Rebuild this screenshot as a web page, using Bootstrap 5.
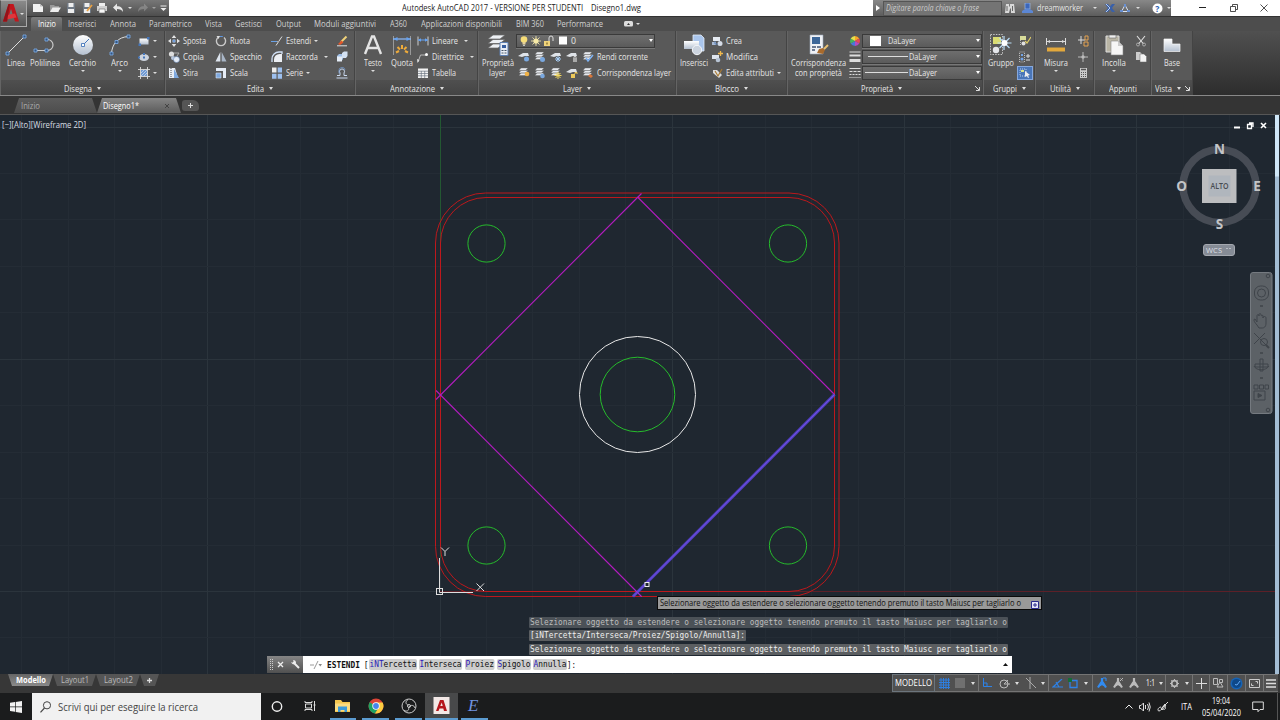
<!DOCTYPE html>
<html lang="it">
<head>
  <meta charset="UTF-8">
  <title>Autodesk AutoCAD 2017 - Disegno1.dwg</title>
  <link href="https://cdn.jsdelivr.net/npm/bootstrap@5.3.0/dist/css/bootstrap.min.css" rel="stylesheet">
  <style>
    body { width: 1280px; height: 720px; overflow: hidden; background: #333; color: #e6e6e6; font: 8.8px/10px "Open Sans", "Noto Sans", sans-serif; }
    svg { display: block; flex: none; }
    span { white-space: nowrap; }
    .g12 { width: 12px; height: 12px; }
    .g24 { width: 24px; height: 24px; }
    .dn { flex: none; width: 0; height: 0; border: 2px solid transparent; border-top: 2.5px solid #ddd; border-bottom: 0; }
    .dn.wide { border-left-width: 2.5px; border-right-width: 2.5px; border-top-width: 3px; }
    .cell { display: flex; align-items: center; justify-content: center; flex: none; }

    /* barra del titolo */
    .appbtn { width: 27px; height: 27px; background: linear-gradient(#8b8b8b, #555); border: 1px solid #aaa; border-left-color: #555; }
    .hdr { height: 31px; background: #4d4d4d; }
    .titlerow { height: 16px; }
    .qat { width: 142px; background: linear-gradient(#777, #4e4e4e); }
    .apptitle { width: 704px; background: #fff; color: #222; padding-left: 233px; gap: 8px; }
    .info { width: 298px; background: linear-gradient(#888, #5c5c5c); }
    .kwbox { width: 120px; height: 15px; background: #747474; border: 1px solid #555; font-style: italic; color: #ccc; padding-left: 2px; }
    .winbtns { width: 109px; background: #fff; color: #222; }
    .rtabs { height: 15px; border-top: 1px solid #333; color: #d0d0d0; }
    .rtab-on { width: 31px; background: linear-gradient(#7b7b7b, #5a5a5a); border-radius: 2px 2px 0 0; color: #fff; height: 14px; }

    /* ribbon */
    .ribbon { height: 65px; background: linear-gradient(#505050, #2d2d2d); border-bottom: 1px solid #888; }
    .panel { flex: none; background: #595959; border-right: 1px solid #444; border-left: 1px solid #646464; }
    .pbody { height: 49px; padding-top: 1.5px; }
    .ptitle { height: 15px; padding-top: 2px; background: linear-gradient(#4f4f4f, #444); gap: 5px; position: relative; }
    .big { flex: none; text-align: center; display: flex; flex-direction: column; align-items: center; }
    .big span { line-height: 10px; }
    .big svg { margin-bottom: 1px; }
    .big .dn { margin-top: 2px; }
    .sm { height: 16px; display: flex; align-items: center; gap: 3px; }
    .sm .dn { margin-left: 3px; }
    .drop { width: 120px; height: 14px; border: 1px solid #3a3a3a; background: linear-gradient(#6e6e6e, #5b5b5b); display: flex; align-items: center; padding-right: 1px; box-shadow: 0 1px 0 #777; }
    .drop .dn { margin-left: auto; border-top-color: #fff; }
    .sm.tight { gap: 1px; }
    .sel { width: 16px; height: 14px; background: #4a76b8; border: 1px solid #86a8dd; }
    .expand { position: absolute; right: 2px; top: 6px; }

    /* schede disegni */
    .ftabs { height: 19px; background: #343434; padding: 2px 0 0 14px; border-bottom: 1px solid #565656; }
    .ftab { height: 15px; clip-path: polygon(5px 0, calc(100% - 5px) 0, 100% 100%, 0 100%); background: linear-gradient(#5c5c5c, #4d4d4d); color: #aaa; display: flex; align-items: center; flex: none; }
    .ftab.on { background: linear-gradient(#858585, #5b5b5b); color: #fff; }
    .fplus { width: 17px; height: 11px; background: #555; border-radius: 3px 6px 3px 3px; margin: 2px 0 0 1px; }

    /* area di disegno */
    .model { height: 559px; position: relative; background: #1f2730; }
    .edge { position: absolute; right: 1px; top: 0; width: 4px; height: 559px; background: linear-gradient(#cfe6f7 61px, #a3bdd4 62px); }
    .vplabel { position: absolute; left: 2px; top: 5px; color: #d8dde2; }
    .dyn { position: absolute; left: 657px; top: 481px; width: 385px; height: 14px; background: #999; border: 1px solid #0a0a0a; color: #111; padding: 0 2px 1px; }
    .mono { font-family: "DejaVu Sans Mono", monospace; font-size: 8.3px; }
    .hist { position: absolute; left: 529px; top: 502px; gap: 2.4px; }
    .hist div { background: #5b5e61; height: 11px; padding: 0 1px; border-radius: 1px; width: max-content; line-height: 11px; color: #eee; }
    .hist .old { background: #4b5157; color: #bdbdbd; }
    .cmd { position: absolute; left: 267px; top: 541px; width: 745px; height: 17px; background: #fff; color: #111; }
    .cmdgrip { width: 36px; height: 17px; background: linear-gradient(#858585, #505050); }
    .opts { gap: 2.6px; }
    .opt { background: #ccc; border-radius: 2px; padding: 0 .5px; line-height: 11px; }
    .opt b { color: #2a1bb8; font-weight: 400; }
    .vnav { position: absolute; left: 1250px; top: 157px; }

    /* barra di stato */
    .status { height: 19px; background: #373737; }
    .sright { padding-right: 2px; }
    .ltab { height: 12px; clip-path: polygon(0 0, 100% 0, calc(100% - 4px) 100%, 4px 100%); background: #555; color: #bbb; }
    .ltab.on { background: linear-gradient(#666, #8a8a8a); color: #fff; font-weight: 700; }
    .sgroup { height: 18px; background: #505050; border: 1px solid #747474; border-left-width: 0; display: flex; align-items: center; flex: none; }

    /* barra delle applicazioni */
    .task { height: 27px; background: #1b1c1d; }
    .search { width: 229px; background: #f1f1f1; color: #444; font-size: 11.6px; gap: 7px; padding-left: 8px; }
    .app { width: 32.8px; height: 27px; border-bottom: 2px solid transparent; }
    .app.run { position: relative; }
    .app.run::after { content: ""; position: absolute; left: 3px; right: 3px; bottom: -2px; height: 2px; background: #5b9bd0; }
    .app.cur { background: #48494a; }
    .app.cur::after { left: 0; right: 0; }
  </style>
  <script src="https://cdn.jsdelivr.net/npm/bootstrap@5.3.0/dist/js/bootstrap.bundle.min.js"></script>
</head>
<body class="d-flex flex-column">

  <!-- Icone -->
  <svg width="0" height="0" class="position-absolute">
    <defs>
      <linearGradient id="lg" x1="0" y1="0" x2="0" y2="1"><stop offset="0" stop-color="#fff"/><stop offset="1" stop-color="#b4c0d0"/></linearGradient>
      <symbol id="linea" viewBox="0 0 24 24"><path d="M3.500 20.500L20.500 3.500" stroke="#ddd"/><path d="M2 19h3v3H2zM19 2h3v3h-3z" fill="#35567f" stroke="#7fb0ee" stroke-width=".8"/></symbol>
      <symbol id="poli" viewBox="0 0 24 24"><path d="M2.500 17.500h12a5.300 5.300 0 0 0 0-11h-1" fill="none" stroke="#ccc" stroke-width="1.200"/><path d="M1 16h3v3H1zM12 16h3v3h-3zM12 5h3v3h-3z" fill="#35567f" stroke="#7fb0ee" stroke-width=".8"/></symbol>
      <symbol id="cerchio" viewBox="0 0 24 24"><circle cx="12" cy="12" r="10" fill="url(#lg)"/><path d="M12 12l6-6" stroke="#4577bb"/><path d="M10.500 10.500h3v3h-3z" fill="#fff" stroke="#4577bb" stroke-width=".9"/></symbol>
      <symbol id="arco" viewBox="0 0 24 24"><path d="M3.500 20.500C4 11 10 4 20.500 3.500" fill="none" stroke="#ddd"/><path d="M2 19h3v3H2zM19 2h3v3h-3zM7 7.500h3v3H7z" fill="#35567f" stroke="#7fb0ee" stroke-width=".8"/></symbol>
      <symbol id="rett" viewBox="0 0 12 12"><path d="M1.500 3.500h9v6h-9z" fill="url(#lg)"/><path d="M.5 8.500H3V11H.5zM9 2h2.500v2.500H9z" fill="#4577bb"/></symbol>
      <symbol id="elli" viewBox="0 0 12 12"><ellipse cx="6" cy="6.500" rx="5" ry="3.500" fill="#ccd3dd"/><path d="M5 5.500h2v2H5zM5 2h2v2H5zM0 5.500h2v2H0z" fill="#4577bb"/></symbol>
      <symbol id="tratt" viewBox="0 0 12 12"><path d="M3 3h6.500v6.500H3z" fill="#6f9ad4"/><path d="M2.500 0v12M9.500 0v12M0 2.500h12M0 9.500h12" stroke="#ddd" stroke-width=".9"/><path d="M3 9l6-6M3 6l3-3M6 9l3-3" stroke="#e5edf7" stroke-width=".6"/></symbol>
      <symbol id="sposta" viewBox="0 0 12 12"><path d="M6 0l2.300 3H3.700zM6 12l2.300-3H3.700zM0 6l3-2.300v4.600zM12 6L9 3.700v4.600z" fill="#e4e4e4"/><path d="M4.800 4.800h2.400v2.400H4.800z" fill="#4f89d6" stroke="#d5e3f5" stroke-width=".5"/></symbol>
      <symbol id="copia" viewBox="0 0 12 12"><circle cx="3.500" cy="3" r="2.600" fill="#ddd"/><path d="M6 2h5l-2 3" fill="none" stroke="#aaa"/><circle cx="5" cy="7" r="2" fill="#b8c6dc"/><circle cx="8.500" cy="8.500" r="3" fill="#e4ebf5" stroke="#5c83b8" stroke-width=".5"/></symbol>
      <symbol id="stira" viewBox="0 0 12 12"><path d="M1 1h6l3 10H1z" fill="#e8edf5"/><path d="M6 2l5 9H6z" fill="#7fa9df"/><path d="M3 1v10" stroke="#555" stroke-dasharray="1"/></symbol>
      <symbol id="ruota" viewBox="0 0 12 12"><path d="M3 2.500a4.600 4.600 0 1 0 6 0" fill="none" stroke="#c9c9c9" stroke-width="1.400"/><path d="M4.200 1.500h3.600" stroke="#5e97e2"/><path d="M1.500 1l3.500 0-1.500 3z" fill="#ddd"/></symbol>
      <symbol id="specchio" viewBox="0 0 12 12"><path d="M5.300 1v9.500H.5z" fill="#dde4ee"/><path d="M6.700 1v9.500h4.800z" fill="#a8b5c6"/></symbol>
      <symbol id="scala" viewBox="0 0 12 12"><path d="M1 1h10v10H8V4H1z" fill="#e6ecf5"/><path d="M1 6h5v5H1z" fill="#7fa9df" stroke="#dce8f8" stroke-width=".6"/></symbol>
      <symbol id="estendi" viewBox="0 0 12 12"><path d="M0 6.500h6" stroke="#6ba2e6"/><path d="M5 10.500L11 1.500" stroke="#ddd"/><path d="M6 6.500h2" stroke="#aaa"/></symbol>
      <symbol id="racc" viewBox="0 0 12 12"><path d="M1 11V8a7 7 0 0 1 7-7h3v2" fill="none" stroke="#cfdff5" stroke-width="1.300"/><path d="M3 11V8.500A5.500 5.500 0 0 1 8.500 3H11v8z" fill="#eceff4"/></symbol>
      <symbol id="serie" viewBox="0 0 12 12"><path d="M1 .5h4.500v5H1z" fill="#eee"/><path d="M6.700.5H11v5H6.700zM1 6.700h4.500v5H1zM6.700 6.700H11v5H6.700z" fill="#9dc0ef"/></symbol>
      <symbol id="canc" viewBox="0 0 12 12"><path d="M10.500 1.500L5 7" stroke="#f0d27a" stroke-width="2"/><path d="M5.500 5.500l2 2L4 10 2 9z" fill="#e2562a"/><path d="M1 10.800h10" stroke="#eee" stroke-width=".9"/></symbol>
      <symbol id="esplodi" viewBox="0 0 12 12"><path d="M1 5l2-2h4v5l-1.500 2H1z" fill="#9fbfe8"/><path d="M6 2l2-1.500h3.500V5L10 7H6z" fill="#d3e1f3"/><path d="M1 5.500h5v5H1z" fill="#e5edf7"/></symbol>
      <symbol id="offset" viewBox="0 0 12 12"><path d="M.5 11h11M1 8.500h3V6a2.500 2.500 0 1 1 4 0v2.500h3" fill="none" stroke="#c9d8ee"/><path d="M3 6.500V4a3 3 0 0 1 6-1" fill="none" stroke="#7ba8e4" stroke-width=".7"/></symbol>
      <symbol id="testo" viewBox="0 0 24 24"><path d="M4 21L11 3.500h2L20 21M6.500 15h11" fill="none" stroke="#e4e4e4" stroke-width="2.400"/></symbol>
      <symbol id="quota" viewBox="0 0 24 24"><path d="M3.500 3v19M20.500 3v19" stroke="#999"/><path d="M3 6h18" stroke="#8bbcff" stroke-width="1.200"/><path d="M3.500 6l4-2v4zM20.500 6l-4-2v4z" fill="#67a3f1"/><path d="M12 12v4M7.500 14l2.500 2.500M16.500 14L14 16.500M6 19.500l3-1.500M18 19.500l-3-1.500" stroke="#eeab3b" stroke-width="2"/></symbol>
      <symbol id="lineare" viewBox="0 0 12 12"><path d="M1 1.500v9M11 1.500v9" stroke="#ccc"/><path d="M1 5h10" stroke="#67a3f1"/><path d="M1 5l3-1.700v3.400zM11 5L8 3.300v3.400z" fill="#67a3f1"/></symbol>
      <symbol id="dirett" viewBox="0 0 12 12"><path d="M1 11L3.500 4H10" fill="none" stroke="#bbb"/><circle cx="9.500" cy="3.500" r="1.500" fill="#fff"/><path d="M0 8l2.500 1L.5 12z" fill="#ddd"/></symbol>
      <symbol id="tabella" viewBox="0 0 12 12"><path d="M1 1.500h10v9.500H1z" fill="#f3f3f3"/><path d="M1 4.200h10M1 6.500h10M1 8.800h10M4.300 4v7M7.700 4v7" stroke="#6c7582" stroke-width=".7"/></symbol>
      <symbol id="proplay" viewBox="0 0 24 24"><path d="M7 2h12l-5 4H2zM7 6.500h12l-5 4H2zM7 11h10l-5 4H2z" fill="#edf0f4" stroke="#666" stroke-width=".7"/><path d="M14 9.500h8v13h-8z" fill="#e9eef6" stroke="#5d7fb0"/><path d="M16 12h4v3h-4z" fill="#355ea0"/><path d="M15.500 17.500h2m1 0h2m-5 2.500h2m1 0h2" stroke="#456"/></symbol>
      <symbol id="lay3" viewBox="0 0 12 12"><path d="M3 1h7L7.500 3.500H1zM3 3.500h7L7.500 6H1zM3 6h7L7.500 8.500H1z" fill="#e6e9ee" stroke="#666" stroke-width=".4"/></symbol>
      <symbol id="lay1" viewBox="0 0 12 12"><path d="M0 5l5-3h5l1 3H7L4 6z" fill="#dfe3e8"/></symbol>
      <symbol id="lamp" viewBox="0 0 12 12"><circle cx="6" cy="4.500" r="3.300" fill="#f6dd78"/><path d="M4.500 7h3v2.500h-3z" fill="#e7d298"/><path d="M5 10.300h2" stroke="#ddd"/></symbol>
      <symbol id="sole" viewBox="0 0 12 12"><path d="M6 1v10M1 6h10M2.500 2.500l7 7M9.500 2.500l-7 7" stroke="#efe2a4" stroke-width=".9"/><circle cx="6" cy="6" r="2.600" fill="#f6e9a7"/></symbol>
      <symbol id="lucc" viewBox="0 0 12 12"><path d="M2 6h6v5H2z" fill="#f0d47b"/><path d="M7 6V3a2 2 0 0 1 4 0v3" fill="none" stroke="#ddd"/><path d="M5 7.500v2" stroke="#604a10"/></symbol>
      <symbol id="inser" viewBox="0 0 24 24"><path d="M11 2h8l3 3v13H11z" fill="#a9c5ec" stroke="#e4edf9" stroke-width=".8"/><path d="M2 8h15v8H2z" fill="url(#lg)"/><circle cx="15" cy="17" r="4.700" fill="#ccd4df" stroke="#f5f7fa"/></symbol>
      <symbol id="crea" viewBox="0 0 12 12"><path d="M2 2h7v4H2z" fill="#e6ebf2"/><path d="M1 7h4v3H1z" fill="#aabbd4"/><circle cx="9" cy="8.500" r="2.500" fill="#d5dce7"/><path d="M4 6v3h3" fill="none" stroke="#5e82b5"/></symbol>
      <symbol id="modif" viewBox="0 0 12 12"><path d="M1 4h7v4H1z" fill="#dfe5ee"/><circle cx="7" cy="9" r="2.300" fill="#b8c4d4"/><path d="M9.500 0v5M7 2.500h5" stroke="#f0b94d" stroke-width="1.300"/></symbol>
      <symbol id="attr" viewBox="0 0 12 12"><path d="M2 3h4l5 5-3 3-6-5z" fill="#ddd"/><path d="M4 4l3 5 4-7" fill="none" stroke="#a9792f" stroke-width="1.100"/></symbol>
      <symbol id="corr" viewBox="0 0 24 24"><path d="M3 2h13v19H3z" fill="#eff1f5" stroke="#9aa8bb" stroke-width=".6"/><path d="M5 4h8v7H5z" fill="#3c6698"/><path d="M5 14h4m1 0h4M5 17h3" stroke="#405270" stroke-width="1.300"/><path d="M12 16l4-1 2 2-2 4-6-1z" fill="#a86a2c"/><path d="M17 16l4-4" stroke="#eabf70" stroke-width="2"/></symbol>
      <symbol id="ruotacol" viewBox="0 0 12 12"><path d="M6 6V1a5 5 0 0 1 4.300 2.500z" fill="#f7a328"/><path d="M6 6l4.300-2.500a5 5 0 0 1 0 5z" fill="#e84855"/><path d="M6 6l4.300 2.500A5 5 0 0 1 6 11z" fill="#b54bc0"/><path d="M6 6v5a5 5 0 0 1-4.300-2.500z" fill="#4979d8"/><path d="M6 6L1.700 8.500a5 5 0 0 1 0-5z" fill="#44b55b"/><path d="M6 6L1.700 3.500A5 5 0 0 1 6 1z" fill="#e5e04c"/></symbol>
      <symbol id="spess" viewBox="0 0 12 12"><path d="M.5 1h11" stroke="#ddd"/><path d="M.5 4.500h11" stroke="#ddd" stroke-width="2"/><path d="M.5 9.500h11" stroke="#ddd" stroke-width="3"/></symbol>
      <symbol id="tipol" viewBox="0 0 12 12"><path d="M.5 1.500h11" stroke="#ddd"/><path d="M.5 4.500h11" stroke="#ddd" stroke-dasharray="3 1"/><path d="M.5 7.500h11" stroke="#ddd" stroke-dasharray="2 1"/><path d="M.5 10.500h11" stroke="#ddd" stroke-dasharray="1 1"/></symbol>
      <symbol id="gruppo" viewBox="0 0 24 24"><path d="M1.500 1.500h12v20h-12z" fill="none" stroke="#c5c5c5" stroke-dasharray="1.500 1.200"/><path d="M4 4h8v7H4z" fill="#d9dc73"/><circle cx="7" cy="17" r="3.200" fill="#e5e7eb"/><path d="M15 3v14M8.500 10h14M10.500 5l10 10M20.500 5l-10 10" stroke="#b9ddf8" stroke-width="1.200"/><circle cx="15.500" cy="10" r="3" fill="#fff"/></symbol>
      <symbol id="gr1" viewBox="0 0 12 12"><path d="M1 1h6v4H1z" fill="#d9dc9a"/><path d="M1.500 5v6" stroke="#bbb" stroke-dasharray="1"/><circle cx="4.500" cy="8.500" r="2" fill="#e1e1e1"/><path d="M6 6l2 2 4-6" fill="none" stroke="#e1cf69" stroke-width="1.200"/></symbol>
      <symbol id="gr2" viewBox="0 0 12 12"><path d="M.5 1h5v10h-5z" fill="none" stroke="#bbb" stroke-dasharray="1"/><path d="M2 3h2v2H2z" fill="#73a4e6"/><circle cx="3" cy="8" r="1.500" fill="#73a4e6"/><path d="M7 5h4M9 3v4M7 9h4" stroke="#ddd"/></symbol>
      <symbol id="gr3" viewBox="0 0 12 12"><path d="M1 2h6v7H1z" fill="none" stroke="#b8cdea" stroke-dasharray="1"/><path d="M2 3h3v2H2z" fill="#dbe28b"/><path d="M6 4l5 4-2 .5 1 2-1 .5-1-2-2 1z" fill="#eee"/></symbol>
      <symbol id="misura" viewBox="0 0 24 24"><path d="M2.500 5v7M21.500 5v7M3 8.500h18" stroke="#ddd"/><path d="M3 8.500l3-1.500v3zM21 8.500L18 7v3z" fill="#ddd"/><path d="M3 14.500h18v4H3z" fill="#e3a83c"/></symbol>
      <symbol id="ut1" viewBox="0 0 12 12"><path d="M4 1v8M1 5h7" stroke="#ddd"/><path d="M8 1h3v4H8zM7 7h4v4H7z" fill="none" stroke="#e6a350"/></symbol>
      <symbol id="ut2" viewBox="0 0 12 12"><path d="M6 1v10M1 6h10" stroke="#bbb"/><circle cx="6" cy="6" r="1.700" fill="#bbb"/></symbol>
      <symbol id="calc" viewBox="0 0 12 12"><path d="M3 1h7v10H3z" fill="#ccc"/><path d="M4 2.500h5" stroke="#555" stroke-width="1.500"/><path d="M4 5.500h5M4 7.500h5M4 9.500h5" stroke="#555" stroke-dasharray="1"/></symbol>
      <symbol id="incolla" viewBox="0 0 24 24"><path d="M4 3h13v16H4z" fill="#b9b5a5" stroke="#ddd"/><path d="M7 2h7v3H7z" fill="#eee" stroke="#666" stroke-width=".6"/><path d="M9 8h7l5 5v9H9z" fill="#f6f6f6" stroke="#888" stroke-width=".6"/><path d="M16 8v5h5" fill="#ccc"/></symbol>
      <symbol id="taglia" viewBox="0 0 12 12"><path d="M2 1l6.500 8M10 1L3.500 9" stroke="#e0e0e0" stroke-width="1.100"/><circle cx="3" cy="9.500" r="1.500" fill="none" stroke="#aaa"/><circle cx="9" cy="9.500" r="1.500" fill="none" stroke="#aaa"/></symbol>
      <symbol id="copia2" viewBox="0 0 12 12"><path d="M1 1h4l2 2v6H1z" fill="#ccc"/><path d="M5 3h4l2.500 2.500V11H5z" fill="#f3f3f3" stroke="#666" stroke-width=".5"/></symbol>
      <symbol id="base" viewBox="0 0 24 24"><path d="M4 6h8v5h8v7.500H4z" fill="url(#lg)" stroke="#f5f5f5" stroke-width=".7"/></symbol>
      <symbol id="nuovo" viewBox="0 0 12 12"><path d="M1 2h7l3 2.500V10H1z" fill="#f2f2f2"/><path d="M8 2v2.500h3" fill="#bbb"/></symbol>
      <symbol id="apri" viewBox="0 0 12 12"><path d="M1 3h4l1 1h4v6H1z" fill="#999"/><path d="M3.500 5.500H12L9 10H1z" fill="#eee"/></symbol>
      <symbol id="salva" viewBox="0 0 12 12"><path d="M2 1h8v10H2z" fill="#707984"/><path d="M3.500 1h5v4h-5zM3 7h6v4H3z" fill="#eee"/></symbol>
      <symbol id="stampa" viewBox="0 0 12 12"><path d="M3 1h6v3H3z" fill="#eee"/><path d="M1 4h10v5H1z" fill="#d0d0d0"/><path d="M3 7h6v4H3z" fill="#f7f7f7" stroke="#666" stroke-width=".6"/></symbol>
      <symbol id="annulla" viewBox="0 0 12 12"><path d="M5 1.500v2.700c4 0 6 2 6 5.800-1-2-3-3-6-3v2.500L1 5.500z" fill="#e7e7e7"/></symbol>
      <symbol id="omino" viewBox="0 0 12 12"><path d="M6 1v4M5.500 5L2 10.500M6.500 5L10 10.500M4 8.500l2-2.500 2 2.500" stroke="currentColor" fill="none" stroke-width="2.200"/></symbol>
    </defs>
  </svg>

  <!-- Titolo e schede del ribbon -->
  <header class="hdr d-flex">
    <div class="appbtn d-flex align-items-center">
      <svg width="19" height="22" viewBox="0 0 19 22"><path d="M2 18.500L7.500 1h5L18 18.500h-4L10 6 6 18.500z" fill="#c2161d"/><path d="M6 12l8-1.500 1.500 4L5 16.500z" fill="#e2353b"/><path d="M2 18.500L7.500 1H9L6 18.500z" fill="#941218"/></svg>
      <i class="dn"></i>
    </div>
    <div class="d-flex flex-column">
      <div class="titlerow d-flex">
        <div class="qat d-flex align-items-center">
          <div class="cell" style="width:22px"><svg class="g12"><use href="#nuovo"/></svg></div>
          <div class="cell" style="width:11px"><svg class="g12"><use href="#apri"/></svg></div>
          <div class="cell" style="width:22px"><svg class="g12"><use href="#salva"/></svg></div>
          <div class="cell" style="width:10px"><svg class="g12" viewBox="0 0 12 12"><use href="#salva"/><path d="M11 3L6 9" stroke="#e9a142" stroke-width="1.800"/></svg></div>
          <div class="cell" style="width:20px"><svg class="g12"><use href="#stampa"/></svg></div>
          <div class="cell" style="width:12px"><svg class="g12"><use href="#annulla"/></svg></div>
          <div class="cell" style="width:12px"><i class="dn"></i></div>
          <div class="cell opacity-25" style="width:14px"><svg class="g12" viewBox="0 0 12 12"><use href="#annulla" transform="translate(12) scale(-1 1)"/></svg></div>
          <div class="cell opacity-50" style="width:8px"><i class="dn"></i></div>
          <div class="cell" style="width:11px"><svg width="7" height="7"><path d="M.5 1h6" stroke="#eee"/><path d="M.5 3h6l-3 3z" fill="#eee"/></svg></div>
        </div>
        <div class="apptitle d-flex align-items-center"><span data-w="181">Autodesk AutoCAD 2017 - VERSIONE PER STUDENTI</span><span data-w="50">Disegno1.dwg</span></div>
        <div class="info d-flex align-items-center">
          <div class="cell" style="width:10px"><svg width="4" height="6"><path d="M0 0l4 3-4 3z" fill="#fff"/></svg></div>
          <div class="kwbox d-flex align-items-center"><span data-w="93">Digitare parola chiave o frase</span></div>
          <div class="cell" style="width:15px"><svg width="10" height="11"><path d="M1 1h3v2l1 1V1h4l1 9H6V5L5 6 4 10H0z" fill="#d9d9d9"/><path d="M2 3v5M7.500 3v5" stroke="#666"/></svg></div>
          <div class="cell" style="width:20px"><svg width="11" height="11"><path d="M3 0h5v6H3z" fill="#3c67ba" stroke="#9bb7e4" stroke-width=".7"/><path d="M0 10V8l3-2h5l3 2v2z" fill="#5c87d4"/></svg></div>
          <span data-w="46">dreamworker</span>
          <div class="cell" style="width:23px"><i class="dn"></i></div>
          <div class="cell" style="width:8px"><svg width="10" height="8"><path d="M0 0h3l2 2.500L7 0h3L7 4l3 4H7L5 5.500 3 8H0l3-4z" fill="#3960aa"/><path d="M1 0l4 4-4 4" fill="none" stroke="#b7cdf0"/></svg></div>
          <div class="cell" style="width:22px"><svg width="10" height="9"><path d="M5 1l3.500 6.500h-7z" fill="none" stroke="#d8e4f8"/><path d="M0 6h3v2H0zM7 6h3v2H7zM4 0h2v3H4z" fill="#6a91d2"/></svg></div>
          <i class="dn"></i>
          <div class="cell" style="width:34px"><svg width="11" height="11"><circle cx="5.500" cy="5.500" r="5" fill="#fff"/><text x="3.300" y="8.700" font-size="8.500" font-weight="700" fill="#295bb0">?</text></svg></div>
          <i class="dn" style="margin-left:-7px"></i>
        </div>
        <div class="winbtns d-flex align-items-center">
          <div class="cell ms-3" style="width:32px"><svg width="8" height="8"><path d="M0 3.500h7" stroke="#222"/></svg></div>
          <div class="cell" style="width:29px"><svg width="8" height="8"><path d="M.5 2.500h5v5h-5zM2.500 2V.5h5v5H6" fill="none" stroke="#222" stroke-width=".8"/></svg></div>
          <div class="cell" style="width:32px"><svg width="8" height="8"><path d="M.5.5l7 7M7.500.5l-7 7" stroke="#222" stroke-width=".8"/></svg></div>
        </div>
      </div>
      <nav class="rtabs d-flex align-items-center">
        <div class="rtab-on cell ms-1"><span data-w="18">Inizio</span></div>
        <div class="cell" style="width:40px"><span data-w="28">Inserisci</span></div>
        <div class="cell" style="width:42px"><span data-w="26">Annota</span></div>
        <div class="cell" style="width:53px"><span data-w="43">Parametrico</span></div>
        <div class="cell" style="width:32px"><span data-w="17">Vista</span></div>
        <div class="cell" style="width:39px"><span data-w="27">Gestisci</span></div>
        <div class="cell" style="width:40px"><span data-w="25">Output</span></div>
        <div class="cell" style="width:74px"><span data-w="62">Moduli aggiuntivi</span></div>
        <div class="cell" style="width:33px"><span data-w="17">A360</span></div>
        <div class="cell" style="width:93px"><span data-w="81">Applicazioni disponibili</span></div>
        <div class="cell" style="width:43px"><span data-w="28">BIM 360</span></div>
        <div class="cell" style="width:58px"><span data-w="46">Performance</span></div>
        <svg style="margin-left:15px" width="9" height="6"><rect width="9" height="5.500" rx="1.500" fill="#ddd"/><path d="M3 4l1.500-2L6 4z" fill="#333"/></svg>
        <i class="dn" style="margin-left:3px"></i>
      </nav>
    </div>
  </header>

  <!-- Ribbon -->
  <div class="ribbon d-flex">
    <section class="panel" style="width:165px">
      <div class="pbody d-flex">
        <div class="big" style="width:29px"><svg class="g24"><use href="#linea"/></svg><span data-w="18">Linea</span></div>
        <div class="big" style="width:30px"><svg class="g24"><use href="#poli"/></svg><span data-w="30">Polilinea</span></div>
        <div class="big" style="width:45px"><svg class="g24"><use href="#cerchio"/></svg><span data-w="27">Cerchio</span><i class="dn"></i></div>
        <div class="big" style="width:29px"><svg class="g24"><use href="#arco"/></svg><span data-w="17">Arco</span><i class="dn"></i></div>
        <div class="ps-1">
          <div class="sm"><svg class="g12"><use href="#rett"/></svg><i class="dn ms-0"></i></div>
          <div class="sm"><svg class="g12"><use href="#elli"/></svg><i class="dn ms-0"></i></div>
          <div class="sm"><svg class="g12"><use href="#tratt"/></svg><i class="dn ms-0"></i></div>
        </div>
      </div>
      <div class="ptitle cell"><span data-w="28">Disegna</span><i class="dn wide"></i></div>
    </section>

    <section class="panel" style="width:190px">
      <div class="pbody d-flex">
        <div style="width:49px;padding-left:2px">
          <div class="sm"><svg class="g12"><use href="#sposta"/></svg><span data-w="23">Sposta</span></div>
          <div class="sm"><svg class="g12"><use href="#copia"/></svg><span data-w="21">Copia</span></div>
          <div class="sm"><svg class="g12"><use href="#stira"/></svg><span data-w="15">Stira</span></div>
        </div>
        <div style="width:56px">
          <div class="sm"><svg class="g12"><use href="#ruota"/></svg><span data-w="20">Ruota</span></div>
          <div class="sm"><svg class="g12"><use href="#specchio"/></svg><span data-w="32">Specchio</span></div>
          <div class="sm"><svg class="g12"><use href="#scala"/></svg><span data-w="18">Scala</span></div>
        </div>
        <div style="width:65px">
          <div class="sm"><svg class="g12"><use href="#estendi"/></svg><span data-w="25">Estendi</span><i class="dn ms-0"></i></div>
          <div class="sm"><svg class="g12"><use href="#racc"/></svg><span data-w="32">Raccorda</span><i class="dn"></i></div>
          <div class="sm"><svg class="g12"><use href="#serie"/></svg><span data-w="17">Serie</span><i class="dn ms-0"></i></div>
        </div>
        <div>
          <div class="sm"><svg class="g12"><use href="#canc"/></svg></div>
          <div class="sm"><svg class="g12"><use href="#esplodi"/></svg></div>
          <div class="sm"><svg class="g12"><use href="#offset"/></svg></div>
        </div>
      </div>
      <div class="ptitle cell"><span data-w="17">Edita</span><i class="dn wide"></i></div>
    </section>

    <section class="panel" style="width:123px">
      <div class="pbody d-flex">
        <div class="big" style="width:33px"><svg class="g24"><use href="#testo"/></svg><span data-w="18">Testo</span><i class="dn"></i></div>
        <div class="big" style="width:26px"><svg class="g24"><use href="#quota"/></svg><span data-w="22">Quota</span></div>
        <div style="padding-left:2px">
          <div class="sm"><svg class="g12"><use href="#lineare"/></svg><span data-w="26">Lineare</span><i class="dn"></i></div>
          <div class="sm"><svg class="g12"><use href="#dirett"/></svg><span data-w="32">Direttrice</span><i class="dn"></i></div>
          <div class="sm"><svg class="g12"><use href="#tabella"/></svg><span data-w="24">Tabella</span></div>
        </div>
      </div>
      <div class="ptitle cell"><span data-w="45">Annotazione</span><i class="dn wide"></i></div>
    </section>

    <section class="panel" style="width:198px">
      <div class="pbody d-flex">
        <div class="big" style="width:37px"><svg class="g24"><use href="#proplay"/></svg><span data-w="32">Proprietà</span><span data-w="17">layer</span></div>
        <div>
          <div class="sm">
            <div class="drop" style="width:139px;padding-left:1px">
              <svg class="g12"><use href="#lamp"/></svg><svg class="g12"><use href="#sole"/></svg><svg class="g12"><use href="#lucc"/></svg>
              <svg width="13" height="9"><path d="M5 .5h8v8H5z" fill="#fff"/></svg><span style="padding-left:4px">0</span><i class="dn wide"></i>
            </div>
          </div>
          <div class="sm" style="padding-left:2px;gap:4px">
            <svg class="g12" viewBox="0 0 12 12"><use href="#lay1"/><circle cx="8.500" cy="8" r="2.500" fill="#7aa8df"/></svg>
            <svg class="g12" viewBox="0 0 12 12"><use href="#lay3"/><circle cx="8.500" cy="8.500" r="2.500" fill="#7aa8df"/></svg>
            <svg class="g12" viewBox="0 0 12 12"><use href="#lay1"/><path d="M8 5v6M5 8h6M6 6l4 4M10 6l-4 4" stroke="#a7cdf5"/></svg>
            <svg class="g12" viewBox="0 0 12 12"><use href="#lay1"/><path d="M7 7h4v4H7z" fill="#aaa"/><path d="M8 7V5.500h2V7" fill="none" stroke="#ccc"/></svg>
            <svg class="g12" viewBox="0 0 12 12"><use href="#lay3"/><path d="M4 7l2 3 5-6" fill="none" stroke="#7fb3f4" stroke-width="1.500"/></svg>
            <span style="margin-left:-1px"><span data-w="51">Rendi corrente</span></span>
          </div>
          <div class="sm" style="padding-left:2px;gap:4px">
            <svg class="g12" viewBox="0 0 12 12"><use href="#lay3"/><circle cx="9" cy="7" r="2.300" fill="#efb146"/></svg>
            <svg class="g12" viewBox="0 0 12 12"><use href="#lay3"/><circle cx="8.500" cy="9" r="2.300" fill="#7aa8df"/></svg>
            <svg class="g12" viewBox="0 0 12 12"><use href="#lay3"/><path d="M8 5v7M4.500 8.500h7M5.500 6l5 5M10.500 6l-5 5" stroke="#f2d75f"/></svg>
            <svg class="g12" viewBox="0 0 12 12"><use href="#lay1"/><path d="M5 7h4v4H5z" fill="#edc95a"/><path d="M9 7V5.500h2V7" fill="none" stroke="#edc95a"/></svg>
            <svg class="g12" viewBox="0 0 12 12"><use href="#lay3"/><path d="M6 9l2-2 3 2-2 2z" fill="#d9763a"/></svg>
            <span style="margin-left:-1px"><span data-w="74">Corrispondenza layer</span></span>
          </div>
        </div>
      </div>
      <div class="ptitle cell"><span data-w="19">Layer</span><i class="dn wide"></i></div>
    </section>

    <section class="panel" style="width:111px">
      <div class="pbody d-flex">
        <div class="big" style="width:34px"><svg class="g24"><use href="#inser"/></svg><span data-w="28">Inserisci</span></div>
        <div>
          <div class="sm"><svg class="g12"><use href="#crea"/></svg><span data-w="16">Crea</span></div>
          <div class="sm"><svg class="g12"><use href="#modif"/></svg><span data-w="32">Modifica</span></div>
          <div class="sm"><svg class="g12"><use href="#attr"/></svg><span data-w="48">Edita attributi</span><i class="dn ms-0"></i></div>
        </div>
      </div>
      <div class="ptitle cell"><span data-w="24">Blocco</span><i class="dn wide"></i></div>
    </section>

    <section class="panel" style="width:196px">
      <div class="pbody d-flex">
        <div class="big" style="width:61px"><svg class="g24"><use href="#corr"/></svg><span data-w="55">Corrispondenza</span><span data-w="47">con proprietà</span></div>
        <div>
          <div class="sm tight"><svg class="g12"><use href="#ruotacol"/></svg><div class="drop" style="padding-left:7px"><svg width="11" height="10"><path d="M0 0h11v10H0z" fill="#fff"/></svg><span style="padding-left:7px"><span data-w="28">DaLayer</span></span><i class="dn wide"></i></div></div>
          <div class="sm tight"><svg class="g12"><use href="#spess"/></svg><div class="drop" style="padding-left:5px"><svg width="41" height="3"><path d="M0 1.500h40" stroke="#ddd"/></svg><span data-w="28">DaLayer</span><i class="dn wide"></i></div></div>
          <div class="sm tight"><svg class="g12"><use href="#tipol"/></svg><div class="drop" style="padding-left:2px"><svg width="44" height="3"><path d="M0 1.500h43" stroke="#ddd"/></svg><span data-w="28">DaLayer</span><i class="dn wide"></i></div></div>
        </div>
      </div>
      <div class="ptitle cell pe-2"><span data-w="32">Proprietà</span><i class="dn wide"></i><svg class="expand" width="5" height="5"><path d="M0 0l4 4M4.500 1v3.500H1" stroke="#ddd" fill="none"/></svg></div>
    </section>

    <section class="panel" style="width:52px">
      <div class="pbody d-flex">
        <div class="big" style="width:33px"><svg class="g24"><use href="#gruppo"/></svg><span data-w="26">Gruppo</span></div>
        <div>
          <div class="sm"><div class="cell" style="width:16px"><svg class="g12"><use href="#gr1"/></svg></div></div>
          <div class="sm"><div class="cell" style="width:16px"><svg class="g12"><use href="#gr2"/></svg></div></div>
          <div class="sm"><div class="sel cell"><svg class="g12"><use href="#gr3"/></svg></div></div>
        </div>
      </div>
      <div class="ptitle cell"><span data-w="24">Gruppi</span><i class="dn wide"></i></div>
    </section>

    <section class="panel" style="width:59px">
      <div class="pbody d-flex">
        <div class="big" style="width:39px"><svg class="g24"><use href="#misura"/></svg><span data-w="24">Misura</span><i class="dn"></i></div>
        <div style="padding-left:2px">
          <div class="sm"><svg class="g12"><use href="#ut1"/></svg></div>
          <div class="sm"><svg class="g12"><use href="#ut2"/></svg></div>
          <div class="sm"><svg class="g12"><use href="#calc"/></svg></div>
        </div>
      </div>
      <div class="ptitle cell"><span data-w="21">Utilità</span><i class="dn wide"></i></div>
    </section>

    <section class="panel" style="width:57px">
      <div class="pbody d-flex">
        <div class="big" style="width:37px"><svg class="g24"><use href="#incolla"/></svg><span data-w="24">Incolla</span><i class="dn"></i></div>
        <div style="padding-left:3px">
          <div class="sm"><svg class="g12"><use href="#taglia"/></svg></div>
          <div class="sm"><svg class="g12"><use href="#copia2"/></svg></div>
        </div>
      </div>
      <div class="ptitle cell"><span data-w="28">Appunti</span></div>
    </section>

    <section class="panel" style="width:42px">
      <div class="pbody d-flex">
        <div class="big w-100"><svg class="g24"><use href="#base"/></svg><span data-w="16">Base</span><i class="dn"></i></div>
      </div>
      <div class="ptitle cell pe-2"><span data-w="17">Vista</span><i class="dn wide"></i><svg class="expand" width="5" height="5"><path d="M0 0l4 4M4.500 1v3.500H1" stroke="#ddd" fill="none"/></svg></div>
    </section>
  </div>

  <!-- Schede dei disegni -->
  <div class="ftabs d-flex">
    <div class="ftab" style="width:83px;padding-left:7px"><span data-w="19">Inizio</span></div>
    <div class="ftab on" style="width:84px;padding-left:6px"><span data-w="36">Disegno1*</span><svg style="margin-left:25px" width="6" height="6"><path d="M1 1l4 4M5 1L1 5" stroke="#444"/></svg></div>
    <div class="fplus cell"><svg width="7" height="7"><path d="M3.500 1v5M1 3.500h5" stroke="#ddd"/></svg></div>
  </div>

  <!-- Area di disegno -->
  <main class="model">
    <svg width="1280" height="559" viewBox="0 115 1280 559" fill="none">
      <g id="griglia"></g>
      <path d="M440.500 115v443" stroke="#235832"/>
      <path d="M440 591.500h835" stroke="#5c2028"/>
      <g stroke="#bd181c">
        <rect x="435.500" y="193" width="403.500" height="403.500" rx="50"/>
        <rect x="440.500" y="197.500" width="394" height="394" rx="45.500"/>
      </g>
      <g stroke="#b41cc0" stroke-width="1.100">
        <path d="M436 399.500L641.500 193.500"/>
        <path d="M637.500 197L834.500 394.500"/>
        <path d="M436 390.500L641.500 596.500"/>
      </g>
      <path d="M834.500 394.500L633 596.500" stroke="#5140c6" stroke-width="3"/>
      <path d="M834.500 394.500L633 596.500" stroke="#7550dc"/>
      <path d="M633.500 588.500l8 8" stroke="#a02cd0"/>
      <g stroke="#26bb2c">
        <circle cx="486.500" cy="243.500" r="18.600"/><circle cx="788" cy="243.500" r="18.600"/>
        <circle cx="486.500" cy="545.500" r="18.600"/><circle cx="788" cy="545.500" r="18.600"/>
        <circle cx="637.500" cy="394.500" r="37.300"/>
      </g>
      <circle cx="637.500" cy="394.500" r="58" stroke="#e8e8e8"/>
      <rect x="645" y="582.500" width="4" height="4" fill="#1f2730" stroke="#eee"/>
      <g stroke="#dedede">
        <path d="M439.500 558v34.500H473"/><rect x="436.500" y="588.500" width="6" height="6"/>
        <path d="M441 547.500l4 4 4-4M445 551.500v4.500M476.500 583.500l7.500 7.500M484 583.500l-7.500 7.500"/>
      </g>
      <!-- finestra e ViewCube -->
      <path d="M1234 127.500h6" stroke="#fff" stroke-width="2"/>
      <path d="M1247.500 124.500h4v4h-4zM1249 123h4v4" stroke="#fff" stroke-width="1.300"/>
      <path d="M1261 123l5 5M1266 123l-5 5" stroke="#fff" stroke-width="1.600"/>
      <circle cx="1219.500" cy="186" r="36.500" stroke="#474c55" stroke-width="7.500"/>
      <rect x="1202" y="169" width="34.500" height="34" fill="#bcbdbf"/>
      <rect x="1208.500" y="175.500" width="22" height="21" fill="#b0b6bd"/>
      <g fill="#c3c5c8" font-weight="700" font-size="13.500" text-anchor="middle" font-family="Open Sans">
        <text x="1219.500" y="153.500">N</text><text x="1219.500" y="229">S</text>
        <text x="1181.500" y="191">O</text><text x="1257" y="191">E</text>
      </g>
      <text x="1210.500" y="188.800" font-size="9" font-weight="600" fill="#464a50" textLength="18" lengthAdjust="spacingAndGlyphs">ALTO</text>
      <rect x="1203.500" y="244.500" width="31" height="11" rx="2.500" fill="#858b95" stroke="#a4a8af"/>
      <text x="1206" y="252.500" font-size="7.500" fill="#dcdfe4" textLength="16">WCS</text>
      <path d="M1226 248.500h6" stroke="#b9bdc4" stroke-dasharray="2 1"/>
    </svg>
    <div class="edge"></div>
    <span class="vplabel" data-w="84">[−][Alto][Wireframe 2D]</span>

    <svg class="vnav" width="23" height="142" fill="none" stroke="#3f444a">
      <rect x=".5" y=".5" width="21.500" height="141" rx="2.500" fill="#5c6166" stroke="#757a80"/>
      <circle cx="18" cy="4" r="1.800"/>
      <rect x="4.500" y="14" width="14" height="14" rx="6"/><circle cx="11.500" cy="21" r="4"/>
      <path d="M10 34h3M10 81h3M10 106h3" stroke-width="1.500"/>
      <path d="M7 53c-3-3-4-6-2-6l2 3v-6c0-2 2-2 2 0v-1c0-2 2-2 2 0s2-1 2 1v2c0-2 3-2 3 0v5c0 4-2 5-4 5H9z"/>
      <path d="M4 61l12 12M15 61L4 72"/><circle cx="14" cy="70" r="3.500"/><path d="M16 73l3 3" stroke-width="2"/>
      <path d="M10 87h3v12h-3zM5 92h13v3H5z"/><path d="M4 94c2 5 12 5 15 0"/>
      <path d="M4 113h4v4H4zM9.500 113h4v4h-4zM15 113h3.500v4H15zM4 119h11v9H4z"/><path d="M8 121.500l4 2-4 2z" fill="#3f444a"/>
      <circle cx="18" cy="138" r="1.800"/>
    </svg>

    <div class="dyn d-flex align-items-center justify-content-between">
      <span data-w="361">Selezionare oggetto da estendere o selezionare oggetto tenendo premuto il tasto Maiusc per tagliarlo o</span>
      <svg class="mt-1" width="8" height="8"><path d="M.5.500h7v7h-7z" fill="#e5e5f5" stroke="#2b2b8b"/><path d="M4 2v4M2 4h4" stroke="#2b2b8b"/></svg>
    </div>

    <div class="hist mono d-flex flex-column">
      <div class="old"><span data-w="477">Selezionare oggetto da estendere o selezionare oggetto tenendo premuto il tasto Maiusc per tagliarlo o</span></div>
      <div><span data-w="215">[iNTercetta/Interseca/Proiez/Spigolo/Annulla]:</span></div>
      <div><span data-w="477">Selezionare oggetto da estendere o selezionare oggetto tenendo premuto il tasto Maiusc per tagliarlo o</span></div>
    </div>

    <div class="cmd mono d-flex align-items-center">
      <div class="cmdgrip d-flex align-items-center">
        <svg width="36" height="17"><path d="M3.500 3v11M5.500 3v11" stroke="#ccc" stroke-dasharray="1"/><path d="M11 6l5 5M16 6l-5 5" stroke="#eee" stroke-width="1.300"/><path d="M26 6l6 6" stroke="#eee" stroke-width="2"/><path d="M24 6a3 3 0 0 0 4 2l1-1a3 3 0 0 0-3-3l1 2-1 1z" fill="#eee"/></svg>
      </div>
      <svg width="24" height="12"><path d="M7 6h4M11 10l4-8" stroke="#999"/><path d="M15.500 5h3.500l-1.700 2.500z" fill="#888"/></svg>
      <b data-w="33">ESTENDI</b>
      <span class="ps-1" data-w="8.500">[</span>
      <div class="opts d-flex">
        <span class="opt" data-w="48"><b>iNT</b>ercetta</span>
        <span class="opt" data-w="43"><b>I</b>nterseca</span>
        <span class="opt" data-w="29.500"><b>P</b>roiez</span>
        <span class="opt" data-w="34"><b>S</b>pigolo</span>
        <span class="opt" data-w="34"><b>A</b>nnulla</span>
      </div>
      <span data-w="9">]:</span>
      <svg class="ms-auto me-1" width="5" height="3"><path d="M0 3h5L2.500 0z" fill="#111"/></svg>
    </div>
  </main>

  <!-- Barra di stato -->
  <div class="status d-flex justify-content-between">
    <div class="d-flex ps-2">
      <div class="ltab on cell" style="width:45px"><span data-w="30">Modello</span></div>
      <div class="ltab cell" style="width:43px"><span data-w="28">Layout1</span></div>
      <div class="ltab cell" style="width:44px"><span data-w="29">Layout2</span></div>
      <div class="ltab cell" style="width:19px"><svg width="7" height="7"><path d="M3.500 1v5M1 3.500h5" stroke="#ddd" stroke-width="1.300"/></svg></div>
    </div>
    <div class="d-flex text-white sright">
      <div class="sgroup border-start border-secondary justify-content-center" style="width:43px"><span data-w="37">MODELLO</span></div>
      <div class="sgroup" style="width:44px">
        <div class="cell" style="width:18px"><svg width="11" height="11"><path d="M2 0v11M4.500 0v11M7 0v11M9.500 0v11M0 2h11M0 4.500h11M0 7h11M0 9.500h11" stroke="#2d7fe2"/></svg></div>
        <div class="cell" style="width:14px"><svg width="10" height="10"><path d="M0 0h10v10H0z" fill="#707070"/></svg></div>
        <div class="cell" style="width:11px"><i class="dn wide"></i></div>
      </div>
      <div class="sgroup" style="width:70px">
        <div class="cell" style="width:16px"><svg width="10" height="10"><path d="M1.500 0v8.500H10M1 5h4v4" fill="none" stroke="#2d82e8"/></svg></div>
        <div class="cell" style="width:18px"><svg width="11" height="11"><circle cx="5" cy="6" r="4" fill="none" stroke="#bbb"/><path d="M5 6h6M5 6l4-4" stroke="#bbb"/></svg></div>
        <div class="cell" style="width:8px"><i class="dn wide"></i></div>
        <div class="cell" style="width:18px"><svg width="11" height="12"><path d="M1 1l10 10M5 0v12" stroke="#aaa"/></svg></div>
        <div class="cell" style="width:8px"><i class="dn wide"></i></div>
      </div>
      <div class="sgroup" style="width:44px">
        <div class="cell" style="width:16px"><svg width="11" height="9"><path d="M10 0L1 8h10M4 3l3 5" fill="none" stroke="#2d82e8" stroke-width="1.200"/></svg></div>
        <div class="cell" style="width:17px"><svg width="11" height="11"><path d="M2 2.500h7v7H2z" fill="none" stroke="#2d82e8" stroke-width="1.300"/><path d="M0 0h4v4H0z" fill="#176d39"/></svg></div>
        <div class="cell" style="width:8px"><i class="dn wide"></i></div>
      </div>
      <div class="sgroup" style="width:73px">
        <div class="cell" style="width:17px;color:#318bf1"><svg class="g12" viewBox="0 0 12 12"><use href="#omino"/><path d="M7 1h3v3" fill="none" stroke="#318bf1"/></svg></div>
        <div class="cell" style="width:16px;color:#bbb"><svg class="g12" viewBox="0 0 12 12"><use href="#omino"/><path d="M8 4l3-3M8.500 1.500l2 2" stroke="#bbb"/></svg></div>
        <div class="cell" style="width:15px;color:#bbb"><svg class="g12"><use href="#omino"/></svg></div>
        <div class="cell" style="width:18px"><span data-w="9">1:1</span></div>
        <i class="dn wide"></i>
      </div>
      <div class="sgroup" style="width:27px">
        <div class="cell" style="width:16px"><svg width="9" height="9"><circle cx="4.500" cy="4.500" r="2.800" fill="none" stroke="#bbb" stroke-width="1.700"/><path d="M4.500 0v9M0 4.500h9M1.300 1.300l6.400 6.400M7.700 1.300L1.300 7.700" stroke="#bbb" stroke-dasharray="1.500 6"/></svg></div>
        <div class="cell" style="width:9px"><i class="dn wide"></i></div>
      </div>
      <div class="sgroup justify-content-center" style="width:17px"><svg width="11" height="11"><path d="M5.500 0v11M0 5.500h11" stroke="#ddd"/></svg></div>
      <div class="sgroup justify-content-center" style="width:18px"><svg width="11" height="10"><path d="M.5.500h4v6h-4zM6.500 1.500h3v3h-3z" fill="none" stroke="#bbb"/><path d="M4 9l3-5 3 5z" fill="none" stroke="#bbb"/></svg></div>
      <div class="sgroup justify-content-center" style="width:18px"><svg width="13" height="13"><circle cx="6.500" cy="6.500" r="6" fill="#1663b5"/><circle cx="6.500" cy="6.500" r="4.500" fill="#0e4889"/><path d="M5 7.500l2 .500 3-4" stroke="#63a9f4" fill="none"/></svg></div>
      <div class="sgroup justify-content-center" style="width:18px"><svg width="11" height="9"><path d="M.5.500h10v8H.5z" fill="none" stroke="#ccc"/><path d="M6.500 2.500h2v2M4.500 6.500h-2v-2" fill="none" stroke="#ccc"/></svg></div>
      <div class="sgroup justify-content-center border-end-0" style="width:14px"><svg width="10" height="9"><path d="M0 1h10M0 4.500h10M0 8h10" stroke="#ddd" stroke-width="1.300"/></svg></div>
    </div>
  </div>

  <!-- Barra delle applicazioni -->
  <footer class="task d-flex align-items-center">
    <div class="cell" style="width:32px"><svg width="12" height="12"><path d="M0 1.800l5-.7v4.500H0zM5.700 1L12 0v5.600H5.700zM0 6.300h5v4.500l-5-.7zM5.700 6.300H12V12l-6.300-1z" fill="#f2f2f2"/></svg></div>
    <div class="search h-100 d-flex align-items-center"><svg width="11" height="12"><circle cx="7" cy="4.300" r="3.600" fill="none" stroke="#444"/><path d="M4.500 7L.5 11.300" stroke="#444" stroke-width="1.200"/></svg><span data-w="140">Scrivi qui per eseguire la ricerca</span></div>
    <div class="app cell"><svg class="g12" viewBox="0 0 12 12"><circle cx="6" cy="6.500" r="4.700" fill="none" stroke="#eee" stroke-width="1.400"/></svg></div>
    <div class="app cell"><svg class="g12" viewBox="0 0 12 12"><path d="M1.500 4h6v4h-6zM1 1v1.500h7V1M1 11V9.500h7V11M10.500 1v10M9.500 5h2" fill="none" stroke="#ddd"/></svg></div>
    <div class="app run cell"><svg width="16" height="14"><path d="M0 1h6l1.500 2H15v10H0z" fill="#f4c64f"/><path d="M0 4.500h15V12H0z" fill="#fadb80"/><path d="M3 7.500h9V13H9.500v-2h-4v2H3z" fill="#3b9ad9"/></svg></div>
    <div class="app run cell"><svg width="16" height="16" viewBox="0 0 16 16"><circle cx="8" cy="8" r="7.500" fill="#dc4437"/><path d="M8 8L1.600 4.200a7.500 7.500 0 0 0 5.400 11.200L11 9z" fill="#1da261"/><path d="M8 4.500h6.600A7.500 7.500 0 0 1 7 15.400L11.200 9z" fill="#fdcd41"/><circle cx="8" cy="8" r="3.700" fill="#fff"/><circle cx="8" cy="8" r="2.900" fill="#4786ec"/></svg></div>
    <div class="app run cell"><svg width="16" height="16" fill="none" stroke="#ccc"><circle cx="8" cy="8" r="7" stroke-width="1"/><path d="M7 1.500c-3 2-2.500 5 .5 5.500M14 10c-1-3-4-3.500-6-1M3 12.500c3 1.500 5.500 0 4.500-3"/><circle cx="8" cy="8" r="1.500"/></svg></div>
    <div class="app run cur cell"><svg width="17" height="17"><path d="M.5 0h16v17H.5z" fill="#f3e8e6"/><path d="M3 14L7 3h3.500L14 14h-3l-.7-2.500H6.500L5.500 14z" fill="#b5161d"/><path d="M7.300 9h2.400L8.700 5.500z" fill="#f3e8e6"/></svg></div>
    <div class="app run cell"><svg width="16" height="17"><text x="2" y="14" font-family="Liberation Serif" font-style="italic" font-size="17" fill="#7293e0">E</text></svg></div>

    <div class="ms-auto d-flex align-items-center text-white">
      <div class="cell" style="width:16px"><svg width="8" height="5"><path d="M.5 4.500L4 1l3.500 3.500" fill="none" stroke="#eee"/></svg></div>
      <div class="cell" style="width:16px"><svg width="12" height="10" fill="none" stroke="#ddd"><path d="M.5 3.500H2L4.500 1v8L2 6.500H.5zM6.500 3v4M8.500 2q2 3 0 6M10 .5q2.500 4.500 0 9"/></svg></div>
      <div class="cell" style="width:19px"><svg width="12" height="12" fill="none" stroke="#ddd"><path d="M11 1L5 7M9 4l-4 5-1-1 4-5z"/><path d="M4 6c-3 0-4 4-2 4s2-3 4-2 3 0 2-3"/></svg></div>
      <div class="cell" style="width:28px"><span data-w="11">ITA</span></div>
      <div class="cell flex-column" style="width:42px;line-height:12px"><span data-w="18">19:04</span><span data-w="39">05/04/2020</span></div>
      <div class="cell" style="width:32px"><svg width="12" height="12"><path d="M.7 1h10.600v7.500H8L6 10.700V8.500H.7z" fill="none" stroke="#ddd"/></svg></div>
      <div class="cell" style="width:6px"><svg width="1" height="27"><path d="M.5 0v27" stroke="#555"/></svg></div>
    </div>
  </footer>

  <script>
    // Griglia del modello: una linea ogni cinque piu' marcata
    const griglia = document.getElementById('griglia');
    let linee = '';
    for (let k = -9; k <= 17; k++) {
      const x = Math.floor(440 + k * 46.45) + 0.5;
      linee += `<path d="M${x} 115V674" stroke="${k % 5 ? '#242c35' : '#2b343c'}"/>`;
    }
    for (let k = -1; k <= 10; k++) {
      const y = Math.round(591 - k * 46.45) + 0.5;
      linee += `<path d="M0 ${y}H1275" stroke="${k % 5 ? '#242c35' : '#2b343c'}"/>`;
    }
    griglia.innerHTML = linee;

    // Le etichette vengono strette alla larghezza indicata in data-w
    document.querySelectorAll('[data-w]').forEach(el => {
      el.style.display = 'inline-block';
      el.style.flex = 'none';
      const largh = el.getBoundingClientRect().width;
      el.style.transformOrigin = 'left center';
      el.style.transform = `scaleX(${el.dataset.w / largh})`;
      el.style.marginRight = `${el.dataset.w - largh}px`;
    });
  </script>
</body>
</html>
